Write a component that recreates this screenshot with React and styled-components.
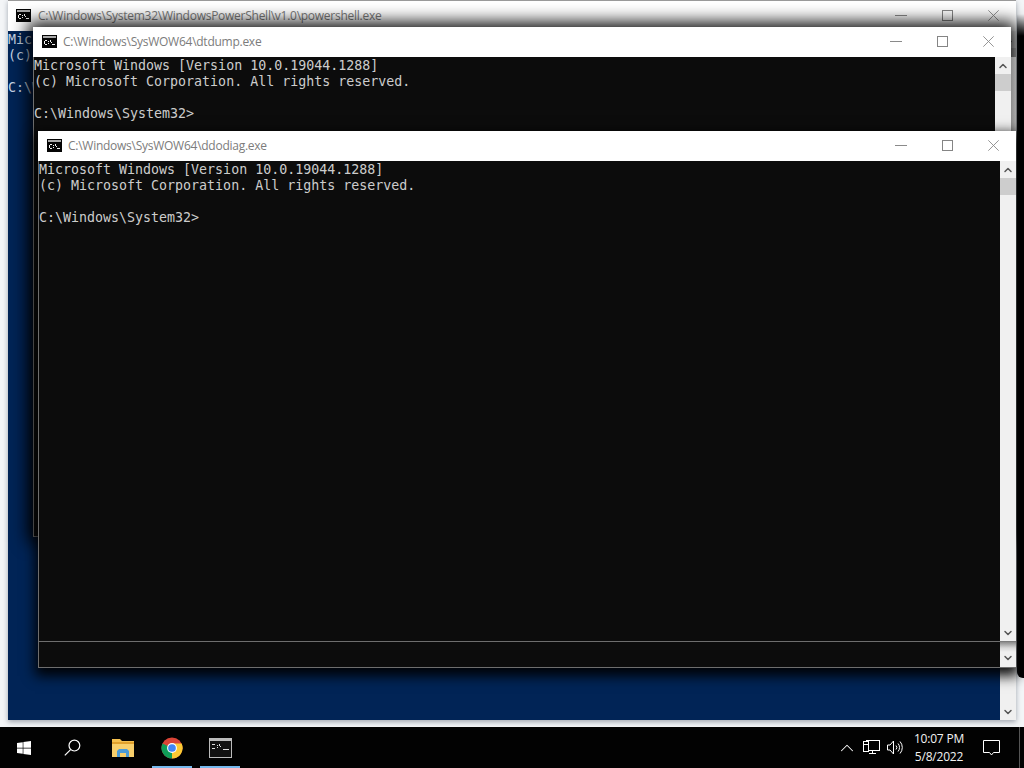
import React from "react";
import styled, { createGlobalStyle } from "styled-components";
import { FaWindows } from "react-icons/fa";
import { ChevronUp, ChevronDown } from "lucide-react";

const Global = createGlobalStyle`
  * { box-sizing: border-box; }
  html, body { margin: 0; padding: 0; height: 100%; overflow: hidden; }
  #root { height: 100%; }
`;

const Screen = styled.div`
  width: 1024px;
  height: 768px;
  display: flex;
  flex-direction: column;
  background: #f3f5f7;
  overflow: hidden;
`;

const Desktop = styled.div`
  position: relative;
  flex: 1;
  overflow: hidden;
`;

// hard dark edge the windows leave on the right side of the screen
const EdgeShadow = styled.div`
  position: absolute;
  left: 1017px;
  top: 14px;
  width: 14px;
  height: 664px;
  border-radius: 0 0 0 6px;
  background: linear-gradient(rgba(0, 0, 0, 0), #000 22px);
`;

const ScrollPeek = styled.div`
  position: absolute;
  left: 1011px;
  top: 57px;
  width: 5px;
  height: 74px;
  background: linear-gradient(90deg, #8d8d8d, #a8a8a8);
`;

const Win = styled.div`
  position: absolute;
  left: ${(p) => p.$x}px;
  top: ${(p) => p.$y}px;
  width: ${(p) => p.$w}px;
  height: ${(p) => p.$h}px;
  display: flex;
  flex-direction: column;
  border-top: ${(p) => (p.$flat ? "1px solid #9a9a9a" : "none")};
  box-shadow: ${(p) => p.$shadow};
`;

const TitleBar = styled.div`
  height: 30px;
  flex: none;
  display: flex;
  align-items: center;
  padding: 0 0 2px ${(p) => (p.$flat ? 8 : 9)}px;
  background: #fff;
`;

const TitleText = styled.span`
  margin-left: ${(p) => (p.$flat ? 7 : 6)}px;
  flex: 1;
  font: 12px "Open Sans", "Noto Sans", sans-serif;
  letter-spacing: -0.26px;
  color: #7c7c7c;
  white-space: nowrap;
`;

const Caption = styled.div`
  width: 46px;
  display: flex;
  justify-content: center;
`;

const Body = styled.div`
  flex: 1;
  min-height: 0;
  display: flex;
  background: ${(p) => p.$bg};
  border-left: ${(p) => (p.$flat ? "none" : "1px solid #6e6e6e")};
  border-bottom: ${(p) => (p.$flat ? "none" : "1px solid #6e6e6e")};
`;

const Pane = styled.div`
  flex: 1;
  min-width: 0;
  display: flex;
  flex-direction: column;
`;

const Console = styled.pre`
  flex: 1;
  margin: 0;
  padding-top: 1px;
  overflow: hidden;
  font: 13.3px/16px "DejaVu Sans Mono", "Liberation Mono", monospace;
  color: ${(p) => p.$fg};
`;

const Footer = styled.div`
  height: 26px;
  flex: none;
  border-top: 1px solid #6e6e6e;
`;

const Scroll = styled.div`
  width: 16px;
  flex: none;
  display: flex;
  flex-direction: column;
  background: #f0f0f0;
  color: #555;
`;

const Thumb = styled.div`
  height: 17px;
  flex: none;
  background: #cdcdcd;
`;

const Spacer = styled.div`
  flex: 1;
`;

const ArrowBox = styled.div`
  height: 17px;
  flex: none;
  display: flex;
  align-items: center;
  justify-content: center;
`;

const FooterArrow = styled.div`
  height: 26px;
  flex: none;
  display: flex;
  align-items: flex-end;
  justify-content: center;
  padding-bottom: 3px;
  background: linear-gradient(#6e6e6e, #8a8a8a 1px, #d8d8d8 7px, #f0f0f0 11px);
`;

const Taskbar = styled.div`
  height: 41px;
  flex: none;
  display: flex;
  align-items: center;
  background: #020202;
  color: #fff;
`;

const TaskSlot = styled.div`
  position: relative;
  width: ${(p) => p.$w || 48}px;
  height: 41px;
  display: flex;
  align-items: center;
  justify-content: center;
  padding-left: ${(p) => p.$pad || 0}px;
`;

const Underline = styled.div`
  position: absolute;
  left: 4px;
  right: 4px;
  bottom: 0;
  height: 2px;
  background: #76b9ed;
`;

const Tray = styled.div`
  margin-left: auto;
  display: flex;
  align-items: center;
  height: 100%;
`;

const TrayIcon = styled.div`
  width: 24px;
  display: flex;
  justify-content: center;
`;

const Clock = styled.div`
  width: 64px;
  text-align: center;
  font: 12px/18px "Open Sans", "Noto Sans", sans-serif;
  letter-spacing: -0.2px;
  color: #f2f2f2;
`;

const Notify = styled.div`
  width: 40px;
  display: flex;
  justify-content: center;
`;

const Peek = styled.div`
  width: 13px;
  height: 100%;
  margin-left: 0;
  padding-left: 8px;

  &::after {
    content: "";
    display: block;
    width: 1px;
    height: 100%;
    background: #555;
  }
`;

function CmdIcon() {
  return (
    <svg width="15" height="13" viewBox="0 0 15 13" shapeRendering="crispEdges">
      <rect width="15" height="13" fill="#050505" />
      <rect x="1" y="1" width="13" height="2" fill="#a9a9a9" />
      <path d="M3 5H5V6H3V9H5V10H3V9H2V6H3ZM6 6H7V7H6ZM6 8H7V9H6ZM8 5H9V7H10V8H9V7H8ZM10 9H13V10H10Z" fill="#f4f4f4" />
    </svg>
  );
}

function MinimizeGlyph() {
  return (
    <svg width="12" height="11" viewBox="0 0 12 11" stroke="#8a8a8a" shapeRendering="crispEdges">
      <path d="M0 5.5H12" />
    </svg>
  );
}

function MaximizeGlyph() {
  return (
    <svg width="11" height="11" viewBox="0 0 11 11" fill="none" stroke="#858585" shapeRendering="crispEdges">
      <rect x=".5" y=".5" width="10" height="10" />
    </svg>
  );
}

function CloseGlyph() {
  return (
    <svg width="11" height="11" viewBox="0 0 11 11" fill="none" stroke="#8a8a8a" strokeWidth=".9">
      <path d="M.3.3L10.7 10.7M10.7.3L.3 10.7" />
    </svg>
  );
}

function Window({ x, y, w, h, title, lines, bg, fg, footer, flat, shadow }) {
  return (
    <Win $x={x} $y={y} $w={w} $h={h} $flat={flat} $shadow={shadow}>
      <TitleBar $flat={flat}>
        <CmdIcon />
        <TitleText $flat={flat}>{title}</TitleText>
        <Caption><MinimizeGlyph /></Caption>
        <Caption><MaximizeGlyph /></Caption>
        <Caption><CloseGlyph /></Caption>
      </TitleBar>
      <Body $bg={bg} $flat={flat}>
        <Pane>
          <Console $fg={fg}>{lines}</Console>
          {footer && <Footer />}
        </Pane>
        <Scroll>
          <ArrowBox><ChevronUp size={12} strokeWidth={3} /></ArrowBox>
          <Thumb />
          <Spacer />
          <ArrowBox><ChevronDown size={12} strokeWidth={3} /></ArrowBox>
          {footer && <FooterArrow><ChevronDown size={12} strokeWidth={3} /></FooterArrow>}
        </Scroll>
      </Body>
    </Win>
  );
}

function SearchGlass() {
  return (
    <svg width="17" height="17" viewBox="0 0 17 17" fill="none" stroke="#fff" strokeWidth="1.2">
      <circle cx="10.4" cy="6.6" r="5.4" />
      <path d="M6.6 10.6L.8 16.4" />
    </svg>
  );
}

function Folder() {
  return (
    <svg width="22" height="18" viewBox="0 0 22 18">
      <path d="M0 0H8L10 2H22V18H0Z" fill="#f5c04e" />
      <rect y="3" width="22" height="2" fill="#e0a02c" />
      <path d="M0 5H22V18H0Z" fill="#f8cf6b" />
      <path d="M5 18V12L7 10H15L17 12V18H14V14H8V18Z" fill="#4c9bd6" />
    </svg>
  );
}

function Chrome() {
  return (
    <svg width="22" height="22" viewBox="0 0 24 24">
      <circle cx="12" cy="12" r="11.5" fill="#db4437" />
      <path d="M12 12L1.6 7A11.5 11.5 0 0 0 12 23.5Z" fill="#0f9d58" />
      <path d="M12 12L12 23.5A11.5 11.5 0 0 0 22.5 7H12Z" fill="#fcc934" />
      <circle cx="12" cy="12" r="5.4" fill="#fff" />
      <circle cx="12" cy="12" r="4.2" fill="#4285f4" />
    </svg>
  );
}

function Terminal() {
  return (
    <svg width="23" height="20" viewBox="0 0 23 20" shapeRendering="crispEdges">
      <rect x=".5" y=".5" width="22" height="19" fill="#111" stroke="#bbb" />
      <rect x="1" y="1" width="21" height="2" fill="#bbb" />
      <path d="M3 6H6V7H3V10H6V11H3ZM8 7H9V8H8ZM8 9H9V10H8ZM10 6H11V8H12V9H11V8H10ZM14 11H20V12H14Z" fill="#ddd" />
    </svg>
  );
}

function NetworkIcon() {
  return (
    <svg width="17" height="15" viewBox="0 0 17 15" fill="none" stroke="#fff" shapeRendering="crispEdges">
      <path d="M3.5 3.5V.5H16.5V10.5H5.5M9.5 10.5V13.5M6 13.5H13" />
      <rect x=".5" y="1.5" width="5" height="10" fill="#020202" />
      <path d="M.5 4.5H5.5" />
    </svg>
  );
}

function VolumeIcon() {
  return (
    <svg width="17" height="15" viewBox="0 0 17 15" fill="none" stroke="#fff">
      <path d="M.5 5H3L6.5 1V14L3 10H.5Z" />
      <path d="M9 5.5A3 3 0 0 1 9 9.5M11 3.5A6 6 0 0 1 11 11.5M13 1.5A9 9 0 0 1 13 13.5" />
    </svg>
  );
}

function ActionCenter() {
  return (
    <svg width="17" height="16" viewBox="0 0 17 16" fill="none" stroke="#fff">
      <path d="M.5.5H16.5V12.5H10.5L8.5 15L6.5 12.5H.5Z" />
    </svg>
  );
}

const ver = "Microsoft Windows [Version 10.0.19044.1288]\n(c) Microsoft Corporation. All rights reserved.\n\nC:\\Windows\\System32>";

export default function App() {
  return (
    <>
      <Global />
      <Screen>
        <Desktop>
          <EdgeShadow />
          <Window
            x={8} y={0} w={1008} h={720} flat
            shadow="0 2px 5px rgba(60,70,90,.45)"
            title="C:\Windows\System32\WindowsPowerShell\v1.0\powershell.exe"
            lines={ver}
            bg="#012456"
            fg="#c8d4e4"
          />
          <Window
            x={33} y={27} w={978} h={510}
            shadow="0 0 16px 5px rgba(0,0,0,.95)"
            title="C:\Windows\SysWOW64\dtdump.exe"
            lines={ver}
            bg="#0c0c0c"
            fg="#cccccc"
          />
          <ScrollPeek />
          <Window
            x={38} y={131} w={978} h={537} footer
            shadow="0 5px 12px 3px rgba(0,0,0,.95)"
            title="C:\Windows\SysWOW64\ddodiag.exe"
            lines={ver}
            bg="#0c0c0c"
            fg="#cccccc"
          />
        </Desktop>
        <Taskbar>
          <TaskSlot><FaWindows size={16} /></TaskSlot>
          <TaskSlot><SearchGlass /></TaskSlot>
          <TaskSlot $w={52} $pad={2}><Folder /></TaskSlot>
          <TaskSlot><Chrome /><Underline /></TaskSlot>
          <TaskSlot><Terminal /><Underline /></TaskSlot>
          <Tray>
            <TrayIcon><ChevronUp size={22} strokeWidth={1.1} /></TrayIcon>
            <TrayIcon><NetworkIcon /></TrayIcon>
            <TrayIcon><VolumeIcon /></TrayIcon>
            <Clock>10:07 PM<br />5/8/2022</Clock>
            <Notify><ActionCenter /></Notify>
            <Peek />
          </Tray>
        </Taskbar>
      </Screen>
    </>
  );
}
